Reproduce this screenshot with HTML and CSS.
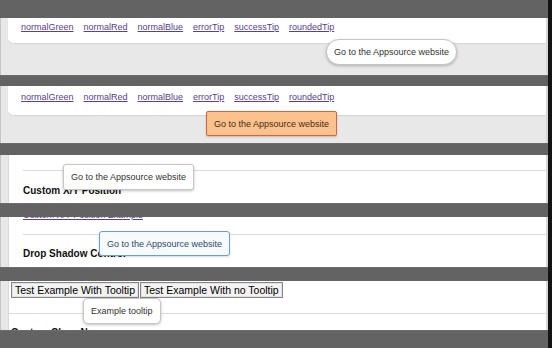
FILE: index.html
```html
<!DOCTYPE html>
<html lang="en">
<head>
    <meta charset="UTF-8">
    <meta name="viewport" content="width=device-width, initial-scale=1.0">
    <title>Tooltip demos</title>
    <link rel="stylesheet" href="styles.css">
</head>
<body>
    <div class="shot">
        <div class="bar bar-top"></div>

        <!-- rounded tip -->
        <div class="strip strip-links">
            <div class="panel">
                <a href="#">normalGreen</a>
                <a href="#">normalRed</a>
                <a href="#">normalBlue</a>
                <a href="#">errorTip</a>
                <a href="#">successTip</a>
                <a href="#">roundedTip</a>
            </div>
            <div class="tip tip-rounded">Go to the Appsource website</div>
        </div>

        <div class="bar bar-1"></div>

        <!-- error tip -->
        <div class="strip strip-links strip-2">
            <div class="panel">
                <a href="#">normalGreen</a>
                <a href="#">normalRed</a>
                <a href="#">normalBlue</a>
                <a href="#">errorTip</a>
                <a href="#">successTip</a>
                <a href="#">roundedTip</a>
            </div>
            <div class="tip tip-error">Go to the Appsource website</div>
        </div>

        <div class="bar bar-2"></div>

        <!-- custom position -->
        <div class="strip strip-3">
            <div class="page">
                <hr class="rule">
                <h3>Custom X/Y Position</h3>
            </div>
            <div class="tip tip-plain">Go to the Appsource website</div>
        </div>

        <div class="bar bar-3"></div>

        <!-- drop shadow -->
        <div class="strip strip-4">
            <div class="page">
                <a class="cut-link" href="#">Custom X/Y Position Example</a>
                <hr class="rule">
                <h3>Drop Shadow Control</h3>
            </div>
            <div class="tip tip-blue">Go to the Appsource website</div>
        </div>

        <div class="bar bar-4"></div>

        <!-- buttons -->
        <div class="strip strip-5">
            <div class="page page-flush">
                <div class="buttons">
                    <button>Test Example With Tooltip</button>
                    <button>Test Example With no Tooltip</button>
                </div>
                <hr class="rule rule-wide">
                <h3>Custom Class Names</h3>
            </div>
            <div class="tip tip-small">Example tooltip</div>
        </div>

        <div class="bar bar-bottom"></div>
    </div>
    <div class="edge"></div>
</body>
</html>
```

FILE: styles.css
```css
body {
    margin: 0;
    width: 552px;
    height: 348px;
    overflow: hidden;
    display: flex;
    background-color: #636363;
    font-family: "Liberation Sans", Arial, sans-serif;
}
.shot {
    width: 548px;
    display: flex;
    flex-direction: column;
}
.edge {
    width: 4px;
    background-color: #141414;
}
.bar {
    background-color: #636363;
    border-top: 1px solid #6d6d6d;
    box-sizing: border-box;
}
.bar-top { height: 18px; border-top: none; }
.bar-1 { height: 11px; }
.bar-2 { height: 12px; }
.bar-3 { height: 14px; }
.bar-4 { height: 14px; }
.bar-bottom { height: 18px; }

.strip {
    position: relative;
    overflow: hidden;
    background-color: #e8e8e8;
    border-left: 1px solid #c4c4c4;
    border-right: 2px solid #d6d6d6;
}
.strip-links { height: 57px; }
.strip-3 { height: 48px; }
.strip-4 { height: 50px; }
.strip-5 { height: 49px; }

.panel {
    margin-left: 7px;
    height: 25px;
    box-sizing: border-box;
    padding: 3px 0 0 13px;
    display: flex;
    gap: 10px;
    background-color: #fff;
    border-bottom-left-radius: 5px;
    box-shadow: 0 1px 1px rgba(0, 0, 0, 0.08);
}
.strip-2 .panel {
    height: 29px;
    padding-top: 5px;
}
a {
    font-size: 9px;
    line-height: 12px;
    color: #58418d;
}

.page {
    display: flow-root;
    margin-left: 7px;
    height: 100%;
    padding-left: 14px;
    background-color: #fff;
    border-left: 1px solid #dadada;
}
.page-flush {
    padding-left: 0;
}
.rule {
    margin: 15px 0 0;
    border: none;
    border-top: 1px solid #dcdcdc;
}
.strip-4 .rule { margin-top: 13px; }
h3 {
    margin: 14px 0 0;
    font-size: 10px;
    line-height: 12px;
    color: #111;
}
.strip-4 h3 { margin-top: 13px; }
.strip-5 h3 { margin: 13px 0 0 2px; }
.cut-link {
    display: block;
    margin-top: -8px;
}

.buttons {
    display: flex;
    gap: 1px;
    padding: 1px 0 0 2px;
}
button {
    font-family: "Liberation Sans", Arial, sans-serif;
    font-size: 10.5px;
    line-height: 12px;
    padding: 1px 3px;
    color: #000;
    background-color: #f3f3f3;
    border: 1px solid #858585;
    box-shadow: inset 0 0 0 1px #e2e2e2;
    border-radius: 0;
}
.rule-wide { margin-top: 15px; }

.tip {
    position: absolute;
    font-size: 9px;
    line-height: 12px;
    padding: 6px 7px;
    white-space: nowrap;
    color: #333;
    background-color: #fff;
    border: 1px solid #c6c6c6;
    box-shadow: 0 1px 3px rgba(0, 0, 0, 0.25);
}
.tip-rounded {
    left: 325px;
    top: 21px;
    border-radius: 13px;
}
.tip-error {
    left: 205px;
    top: 25px;
    padding: 6px 7px 5px;
    color: #4a2a12;
    background-color: #fcc28e;
    border-color: #e2613d;
    border-radius: 2px;
    box-shadow: 0 1px 2px rgba(0, 0, 0, 0.2);
}
.tip-plain {
    left: 62px;
    top: 9px;
    border-radius: 3px;
}
.tip-blue {
    left: 98px;
    top: 14px;
    padding: 6px 7px 5px;
    color: #2d4a68;
    background-color: #f7fafd;
    border-color: #6b9fd3;
    border-radius: 3px;
    box-shadow: 0 1px 2px rgba(0, 0, 0, 0.15);
}
.tip-small {
    left: 82px;
    top: 17px;
    border-radius: 5px;
}
```
